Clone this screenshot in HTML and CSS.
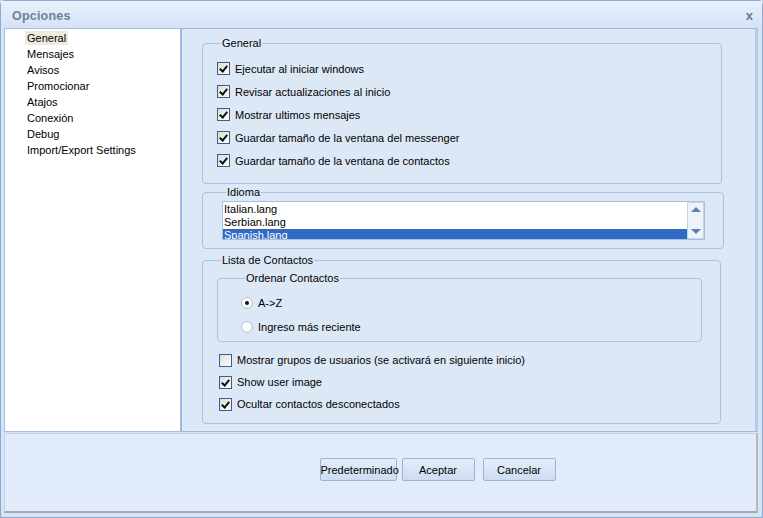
FILE: index.html
```html
<!DOCTYPE html>
<html>
<head>
<meta charset="utf-8">
<link rel="stylesheet" href="styles.css">
</head>
<body>
<div class="window">
  <div class="titlebar">
    <span class="title">Opciones</span>
    <span class="close">x</span>
  </div>
  <div class="main">
    <ul class="sidebar">
      <li class="sel"><span>General</span></li>
      <li><span>Mensajes</span></li>
      <li><span>Avisos</span></li>
      <li><span>Promocionar</span></li>
      <li><span>Atajos</span></li>
      <li><span>Conexión</span></li>
      <li><span>Debug</span></li>
      <li><span>Import/Export Settings</span></li>
    </ul>
    <div class="content">
      <fieldset class="group g-general">
        <legend>General</legend>
        <div class="row"><span class="cb on"></span>Ejecutar al iniciar windows</div>
        <div class="row"><span class="cb on"></span>Revisar actualizaciones al inicio</div>
        <div class="row"><span class="cb on"></span>Mostrar ultimos mensajes</div>
        <div class="row"><span class="cb on"></span>Guardar tamaño de la ventana del messenger</div>
        <div class="row"><span class="cb on"></span>Guardar tamaño de la ventana de contactos</div>
      </fieldset>
      <fieldset class="group g-idioma">
        <legend>Idioma</legend>
        <div class="listbox">
          <div class="items">
            <div class="item">Italian.lang</div>
            <div class="item">Serbian.lang</div>
            <div class="item selitem">Spanish.lang</div>
          </div>
          <div class="scroll">
            <span class="arrow up"></span>
            <span class="arrow down"></span>
          </div>
        </div>
      </fieldset>
      <fieldset class="group g-lista">
        <legend>Lista de Contactos</legend>
        <fieldset class="group g-orden">
          <legend>Ordenar Contactos</legend>
          <div class="rrow"><span class="radio on"></span>A-&gt;Z</div>
          <div class="rrow"><span class="radio"></span>Ingreso más reciente</div>
        </fieldset>
        <div class="row2 first"><span class="cb"></span>Mostrar grupos de usuarios (se activará en siguiente inicio)</div>
        <div class="row2"><span class="cb on"></span>Show user image</div>
        <div class="row2 last"><span class="cb on"></span>Ocultar contactos desconectados</div>
      </fieldset>
    </div>
  </div>
  <div class="footer">
    <button class="btn b-pred">Predeterminado</button>
    <button class="btn b-acc">Aceptar</button>
    <button class="btn b-can">Cancelar</button>
  </div>
</div>
</body>
</html>
```

FILE: styles.css
```css
* { box-sizing: border-box; }
html, body { margin: 0; padding: 0; }
body {
  width: 763px;
  height: 518px;
  overflow: hidden;
  font-family: "Liberation Sans", Arial, sans-serif;
  font-size: 11px;
  color: #000;
  background: #c8d8ee;
}
.window {
  width: 763px;
  height: 518px;
  border: 1px solid #8ea8d4;
  border-radius: 5px 5px 0 0;
  background: #d7e4f6;
  display: flex;
  flex-direction: column;
  padding: 0 4px 4px 3px;
}
.titlebar {
  height: 27px;
  flex: none;
  display: flex;
  align-items: center;
  justify-content: space-between;
  padding: 3px 9px 0 11px;
  margin: 0 -4px 0 -3px;
  background: linear-gradient(#e8f0fb, #d6e3f6);
}
.title {
  font-weight: bold;
  font-size: 12.5px;
  color: #6e809e;
  letter-spacing: 0.2px;
}
.close {
  font-weight: bold;
  font-size: 13px;
  color: #687890;
  margin-top: -2px;
}
.main {
  display: flex;
  height: 404px;
  flex: none;
}
.sidebar {
  list-style: none;
  margin: 0;
  padding: 1px 0 0 0;
  width: 177px;
  background: #fff;
  border: 1px solid #a6bee2;
  flex: none;
}
.sidebar li {
  height: 16px;
  line-height: 16px;
  padding-left: 20px;
}
.sidebar li span {
  padding: 1px 2px;
}
.sidebar li.sel span {
  background: #eeebdd;
}
.content {
  flex: 1;
  background: #dde8f7;
  border: 1px solid #9db6dc;
  border-right: 3px solid #b7c9e6;
  padding: 8px 0 0 20px;
}
.group {
  margin: 0;
  border: 1px solid #a9c1e2;
  border-radius: 4px;
  padding: 0;
}
.group legend {
  padding: 0 1px;
  margin-left: 4px;
  line-height: 13px;
}
.g-general {
  width: 520px;
  height: 147px;
  padding: 7px 0 0 14px;
}
.row {
  height: 23px;
  display: flex;
  align-items: center;
}
.cb {
  width: 13px;
  height: 13px;
  border: 1px solid #3a5f8e;
  background: linear-gradient(135deg, #dcdcd6, #ffffff);
  margin-right: 5px;
  flex: none;
  position: relative;
}
.cb.on::after {
  content: "";
  position: absolute;
  width: 3px;
  height: 6px;
  border-right: 2px solid #111;
  border-bottom: 2px solid #111;
  transform: rotate(40deg);
  left: 3px;
  top: 1px;
}
.g-idioma {
  width: 522px;
  height: 63px;
  margin-top: 2px;
  padding: 2px 0 0 19px;
}
.listbox {
  width: 483px;
  height: 39px;
  border: 1px solid #a8bfdf;
  background: #fff;
  display: flex;
}
.items {
  flex: 1;
  overflow: hidden;
  padding-top: 1px;
}
.item {
  height: 13px;
  line-height: 13px;
  padding-left: 1px;
}
.selitem {
  background: #316ac5;
  color: #fff;
}
.scroll {
  width: 17px;
  flex: none;
  background: #eef3fb;
  border: 1px solid #c3d3ea;
  display: flex;
  flex-direction: column;
  justify-content: space-between;
  align-items: center;
  padding: 4px 0 4px 0;
}
.arrow {
  width: 0;
  height: 0;
  border-left: 5px solid transparent;
  border-right: 5px solid transparent;
}
.arrow.up { border-bottom: 5px solid #5d7fb4; }
.arrow.down { border-top: 5px solid #5d7fb4; }
.g-lista {
  width: 519px;
  height: 170px;
  margin-top: 5px;
  padding: 5px 0 0 14px;
}
.g-orden {
  width: 485px;
  height: 70px;
  padding: 6px 0 0 23px;
}
.rrow {
  height: 24px;
  display: flex;
  align-items: center;
}
.radio {
  width: 12px;
  height: 12px;
  border-radius: 50%;
  border: 1px solid #b9c4cf;
  background: radial-gradient(circle at 40% 40%, #ffffff 40%, #e4e6e8);
  margin-right: 5px;
  position: relative;
  flex: none;
}
.radio.on::after {
  content: "";
  position: absolute;
  left: 3px;
  top: 3px;
  width: 4px;
  height: 4px;
  border-radius: 50%;
  background: #111;
}
.row2 {
  height: 22px;
  display: flex;
  align-items: center;
  padding-left: 2px;
}
.row2 .cb { margin-right: 5px; }
.row2.first { margin-top: 7px; }
.footer {
  flex: 1;
  margin-top: 1px;
  background: #e1ebf9;
  border: 1px solid #c0d2ec;
  border-bottom: 2px solid #a9a9a9;
  border-right: 2px solid #b8b8b8;
  display: flex;
  justify-content: center;
  align-items: flex-start;
  padding-top: 24px;
  padding-left: 114px;
}
.btn {
  font-family: "Liberation Sans", Arial, sans-serif;
  font-size: 11px;
  height: 23px;
  border: 1px solid #9fb3d1;
  border-radius: 2px;
  background: linear-gradient(#e5eefa, #cddcf1);
  color: #000;
  padding: 0;
  margin: 0;
}
.b-pred { width: 77px; }
.b-acc { width: 73px; margin-left: 5px; }
.b-can { width: 73px; margin-left: 8px; }
```
